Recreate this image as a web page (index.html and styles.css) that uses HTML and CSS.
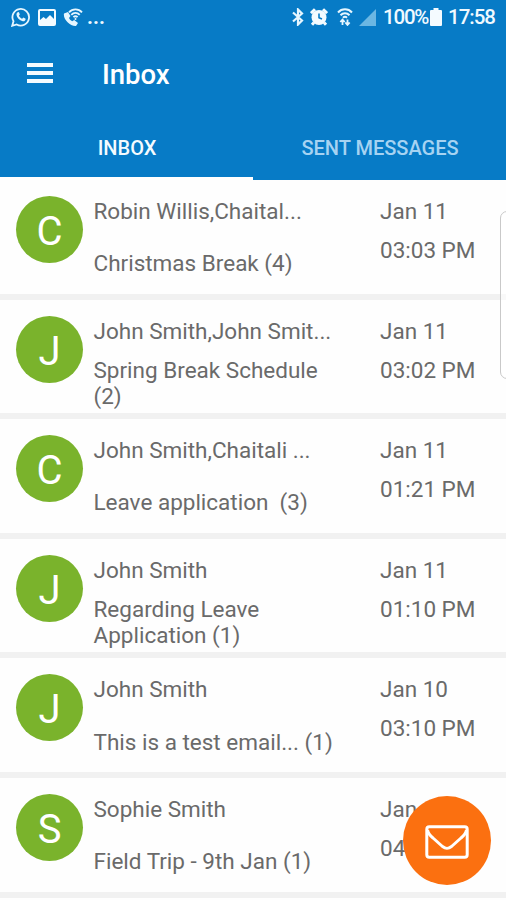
FILE: index.html
```html
<!DOCTYPE html>
<html lang="en">
<head>
  <meta charset="UTF-8">
  <meta name="viewport" content="width=device-width, initial-scale=1.0">
  <title>Inbox</title>
  <link rel="stylesheet" href="styles.css">
</head>
<body>
  <header>
    <div class="status-bar">
      <div class="status-left">
        <svg width="20" height="20" viewBox="0 0 20 20" fill="none" stroke="#e6f6ff">
          <path d="M1.2 18.8l1.3-4.5a8.3 8.3 0 1 1 3.2 3.2z" stroke-width="1.8"/>
          <path d="M6.7 5.3c.6-.4 1.2-.2 1.5.5l.6 1.6-.9 1.4c.8 1.5 1.7 2.4 3.2 3l1.3-1.2 2.2 1.1c.3 1.8-1.4 2.8-2.8 2.5-3.4-.8-6-3.8-6.3-6.4-.1-1.1.4-2 1.2-2.5z" fill="#e6f6ff" stroke="none"/>
        </svg>
        <svg width="18" height="17" viewBox="0 0 18 17">
          <rect x="1" y="1" width="16" height="15" rx="1" fill="none" stroke="#f4fbff" stroke-width="2"/>
          <path d="M2 11l3.5-3 2.5 2 4-4 4 4v6H2z" fill="#f4fbff"/>
        </svg>
        <svg width="20" height="19" viewBox="0 0 20 19" fill="none" stroke="#e6f6ff" stroke-width="1.8">
          <path d="M1 5.5l4-1.5 2.5 4L6 10c.8 1.5 1.7 2.5 3.2 3.2l2-1.200 3.800 3-2 3C7 18.500-.3 11 1 5.500z" fill="#e6f6ff" stroke="none"/>
          <path d="M6 4.3c3.5-4 9.5-4 13 0M8.3 6.8c2.400-2.600 6-2.600 8.400 0M10.400 9.200c1.300-1.300 2.900-1.300 4.200 0"/>
          <circle cx="12.5" cy="11" r="1" fill="#e6f6ff" stroke="none"/>
        </svg>
        <span class="more">...</span>
      </div>
      <div class="status-right">
        <svg class="bluetooth" width="12" height="18" viewBox="0 0 12 18" fill="none" stroke="#e6f6ff" stroke-width="2.2">
          <path d="M1 4.5l9 8-4 4v-15l4 4-9 8"/>
        </svg>
        <svg class="alarm" width="18" height="18" viewBox="0 0 18 18">
          <path d="M1 5.2l4-4M17 5.200l-4-4M4 14.500l-2 2.300M14 14.500l2 2.300" stroke="#f4fbff" stroke-width="3"/>
          <circle cx="9" cy="9.5" r="7.5" fill="#f4fbff"/>
          <path d="M9 5.5v4.3l3 1.2" fill="none" stroke="#077bc6" stroke-width="1.6"/>
        </svg>
        <svg class="wifi" width="16" height="18" viewBox="0 0 16 18" fill="none" stroke="#e6f6ff" stroke-width="2">
          <path d="M1 4.500c3.800-4.200 10.200-4.200 14 0M3.500 7.200c2.500-2.700 6.500-2.700 9 0M6 9.700c1.300-1.200 2.700-1.200 4 0"/>
          <path d="M5.500 17v-5M3.300 14l2.200-2.400L7.700 14M10.500 11.500v5M8.300 14.500l2.200 2.400 2.200-2.400" stroke-width="1.8"/>
        </svg>
        <svg class="signal" width="17" height="17" viewBox="0 0 17 17"><path d="M17 0v17H0z" fill="#6bb7e3"/></svg>
        <span class="percent">100%</span>
        <svg class="battery" width="12" height="18" viewBox="0 0 12 18"><path d="M3.500 0h5v2H11q1 0 1 1v14q0 1-1 1H1q-1 0-1-1V3q0-1 1-1h2.500z" fill="#f4fbff"/></svg>
        <span class="clock">17:58</span>
      </div>
    </div>

    <div class="app-bar">
      <button class="menu" aria-label="Menu"><span></span><span></span><span></span></button>
      <h1>Inbox</h1>
    </div>

    <nav class="tabs">
      <a class="tab active"><span>INBOX</span></a>
      <a class="tab"><span>SENT MESSAGES</span></a>
    </nav>
  </header>

  <main>
    <div class="message">
      <div class="avatar"><span>C</span></div>
      <div class="info">
        <div class="name"><span>Robin Willis,Chaital...</span></div>
        <div class="subject"><span>Christmas Break (4)</span></div>
      </div>
      <div class="date"><div><span>Jan 11</span></div><div><span>03:03 PM</span></div></div>
    </div>
    <div class="message">
      <div class="avatar"><span>J</span></div>
      <div class="info">
        <div class="name"><span>John Smith,John Smit...</span></div>
        <div class="subject"><span>Spring Break Schedule (2)</span></div>
      </div>
      <div class="date"><div><span>Jan 11</span></div><div><span>03:02 PM</span></div></div>
    </div>
    <div class="message">
      <div class="avatar"><span>C</span></div>
      <div class="info">
        <div class="name"><span>John Smith,Chaitali ...</span></div>
        <div class="subject"><span>Leave application&nbsp; (3)</span></div>
      </div>
      <div class="date"><div><span>Jan 11</span></div><div><span>01:21 PM</span></div></div>
    </div>
    <div class="message">
      <div class="avatar"><span>J</span></div>
      <div class="info">
        <div class="name"><span>John Smith</span></div>
        <div class="subject"><span>Regarding Leave Application (1)</span></div>
      </div>
      <div class="date"><div><span>Jan 11</span></div><div><span>01:10 PM</span></div></div>
    </div>
    <div class="message">
      <div class="avatar"><span>J</span></div>
      <div class="info">
        <div class="name"><span>John Smith</span></div>
        <div class="subject"><span>This is a test email... (1)</span></div>
      </div>
      <div class="date"><div><span>Jan 10</span></div><div><span>03:10 PM</span></div></div>
    </div>
    <div class="message">
      <div class="avatar"><span>S</span></div>
      <div class="info">
        <div class="name"><span>Sophie Smith</span></div>
        <div class="subject"><span>Field Trip - 9th Jan (1)</span></div>
      </div>
      <div class="date"><div><span>Jan</span></div><div><span>04</span></div></div>
    </div>
  </main>

  <div class="edge-handle"></div>

  <button class="compose" aria-label="Compose">
    <svg width="44" height="34" viewBox="0 0 44 34" fill="none" stroke="#fff" stroke-width="3" stroke-linejoin="round">
      <rect x="1.8" y="1.8" width="40.4" height="30.4" rx="2.5"/>
      <path d="M2.5 5c.5 3 3 6 5.500 8l9.500 8.500c3.500 2.600 5.500 2.600 9 0L36 13c2.500-2 5-5 5.500-8"/>
    </svg>
  </button>
</body>
</html>
```
FILE: styles.css
```css
* {
  box-sizing: border-box;
}

body {
  margin: 0;
  height: 900px;
  overflow: hidden;
  position: relative;
  background: #fefefe;
  font-family: Roboto, sans-serif;
  color: #6a6a6a;
}

header {
  height: 180px;
  background: #077bc6;
  color: #fff;
}

.status-bar {
  height: 34px;
  padding: 0 12px 0 11px;
  display: flex;
  justify-content: space-between;
  align-items: center;
}

.status-left,
.status-right {
  display: flex;
  align-items: center;
  font-size: 20.5px;
  color: #f0f9ff;
}

.status-left {
  gap: 7px;
}

.more {
  margin-left: -3px;
  font-weight: bold;
}

.alarm {
  margin-left: 6px;
}

.wifi {
  margin-left: 9px;
}

.signal {
  margin-left: 6px;
}

.percent {
  margin-left: 7px;
  width: 45px;
  font-weight: 500;
  letter-spacing: -1.2px;
}

.battery {
  margin-left: 2px;
}

.clock {
  margin-left: 6px;
  width: 46px;
  font-weight: 500;
  letter-spacing: -1px;
}

.app-bar {
  height: 79px;
  padding: 2px 0 0 27px;
  display: flex;
  align-items: center;
}

.menu {
  width: 26px;
  margin-bottom: 3px;
  padding: 0;
  border: none;
  background: none;
  display: flex;
  flex-direction: column;
  gap: 4px;
}

.menu span {
  height: 4px;
  background: #f4fbff;
}

h1 {
  margin: 0 0 0 49px;
  font-size: 27.5px;
  font-weight: 500;
}

.tabs {
  display: flex;
  height: 67px;
}

.tab {
  flex: 1;
  padding: 5px 0 0 1px;
  display: flex;
  align-items: center;
  justify-content: center;
  font-size: 20px;
  font-weight: 500;
  color: #a6d3f2;
  border-bottom: 3px solid transparent;
}

.tab.active {
  color: #f4fbff;
  border-bottom-color: #fff;
}

.message {
  height: 119.6px;
  padding: 16px 0 0 16px;
  display: flex;
  align-items: flex-start;
  border-bottom: 6px solid #f1f1f1;
  font-size: 22.5px;
}

.avatar {
  flex-shrink: 0;
  width: 67px;
  height: 67px;
  border-radius: 50%;
  background: #7ab32c;
  color: #fff;
  font-size: 40px;
  display: flex;
  align-items: center;
  justify-content: center;
  padding-top: 4px;
}

.info {
  flex-shrink: 0;
  width: 297px;
  padding-left: 10.5px;
}

.name,
.date div {
  height: 30px;
  line-height: 30px;
}

.subject {
  width: 245px;
  height: 54px;
  margin-top: 10.5px;
  line-height: 26.5px;
  display: flex;
  align-items: center;
}

.date {
  white-space: nowrap;
}

.date div + div {
  margin-top: 9px;
}

.edge-handle {
  position: absolute;
  top: 211px;
  right: -12px;
  width: 18px;
  height: 168px;
  border: 1px solid #c9c9c9;
  border-radius: 7px;
  background: rgba(255, 255, 255, 0.6);
}

.compose {
  position: absolute;
  left: 403px;
  top: 796px;
  width: 88px;
  height: 89px;
  padding: 2px 0 0;
  border: none;
  border-radius: 50%;
  background: #fb7010;
  display: flex;
  align-items: center;
  justify-content: center;
}
```
